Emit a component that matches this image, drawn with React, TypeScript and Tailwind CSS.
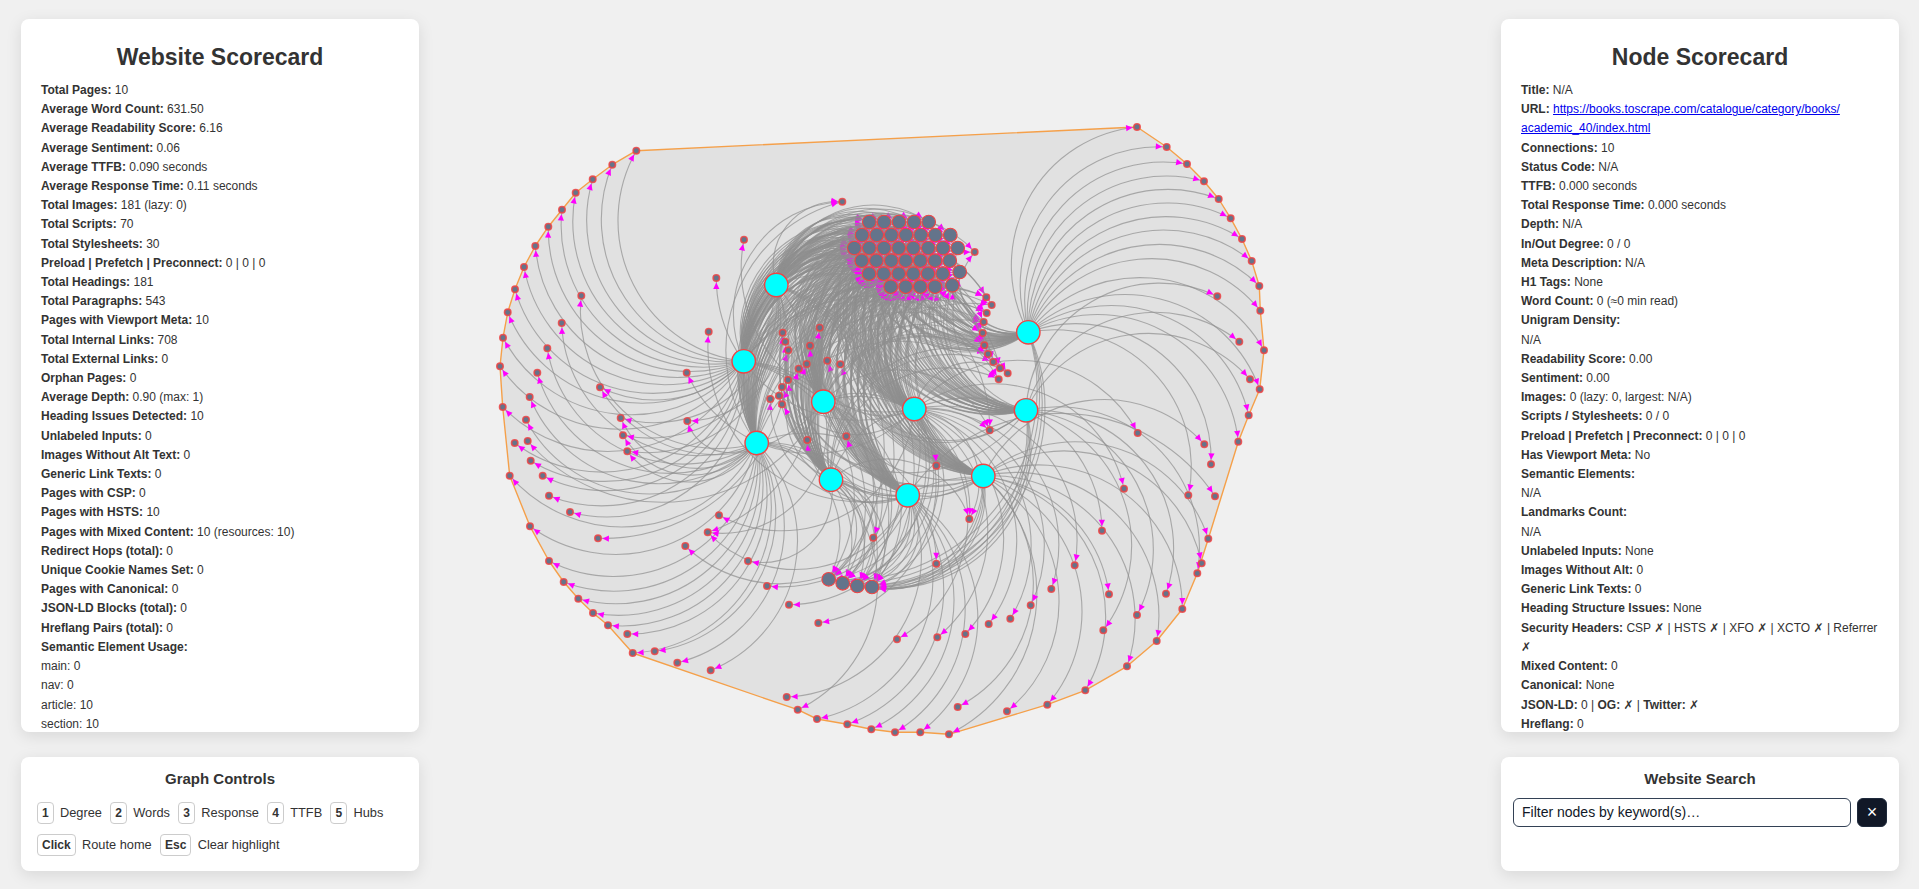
import React from 'react';

type Pt = [number, number];

const hubs: Record<string, Pt> = {
  A: [776.3, 285],
  B: [743.7, 361.3],
  C: [823.3, 401.7],
  D: [914.3, 409],
  E: [1028.3, 332.3],
  F: [1026, 410.3],
  G: [983.3, 476],
  H: [907.7, 495.3],
  I: [831, 479.7],
  J: [756.7, 443],
};
const hubKeys = 'ABCDEFGHIJ';

const hull: Pt[] = [
  [1137, 127], [1166.7, 147], [1187, 164], [1204, 181.3], [1218.7, 199], [1230.7, 218.3], [1242, 239], [1251.7, 261],
  [1259.3, 286], [1260.3, 310.7], [1264, 350.3], [1259.7, 389.3], [1248.7, 415.3], [1238.3, 441.7], [1208.3, 538.7],
  [1197.3, 573.3], [1182.3, 609], [1156.7, 641], [1127, 666.3], [1085.3, 690.3], [1047.3, 704.7], [949, 734.3],
  [920.3, 732.3], [895, 732.3], [871.3, 729.3], [847.3, 724.3], [817, 719], [797.7, 709.7], [632.7, 653], [608, 625.3],
  [593, 613], [578.3, 598.7], [563.7, 582], [549, 561], [530, 526.3], [509.7, 475.7], [502.7, 407], [500, 366.3],
  [503, 337.7], [507.7, 312.3], [515, 289.3], [524, 267], [535.3, 246], [548.3, 226.7], [562, 209.7], [575.7, 192.7],
  [592.7, 179.3], [612.3, 164.7], [636.3, 150.7],
];

// small pages: x, y, which hubs link to them
const leaves: [number, number, string][] = [
  [636.3, 150.7, 'B'], [612.3, 164.7, 'B'], [592.7, 179.3, 'B'], [575.7, 192.7, 'B'], [562, 209.7, 'B'], [548.3, 226.7, 'B'],
  [535.3, 246, 'B'], [524, 267, 'B'], [515, 289.3, 'B'], [507.7, 312.3, 'B'], [503, 337.7, 'B'], [500, 366.3, 'B'],
  [502.7, 407, 'B'], [514.7, 443, 'B'], [530.7, 460.7, 'B'], [542.7, 475.7, 'B'], [549, 495.7, 'B'], [570, 512, 'B'],
  [529.7, 397, 'J'], [526, 419.7, 'J'], [509.7, 475.7, 'J'], [530, 526.3, 'J'], [549, 561, 'J'], [563.7, 582, 'J'],
  [578.3, 598.7, 'J'], [593, 613, 'J'], [608, 625.3, 'J'], [627.3, 634, 'J'], [632.7, 653, 'J'], [654.7, 651.3, 'J'],
  [677.3, 662.7, 'J'], [710.7, 670.3, 'J'], [537.3, 372.7, 'J'], [547.3, 348.3, 'J'], [561.7, 323, 'J'], [581.3, 295.7, 'J'],
  [936.3, 563.7, 'J'],
  [620.7, 418, 'AJ'], [623, 435.3, 'AJ'], [627.3, 451.3, 'AJ'], [687.3, 421, 'AJ'], [707.7, 532.3, 'ACH'], [600, 387.3, 'CA'],
  [527.7, 441, 'C'], [598, 538.3, 'A'],
  [1137, 127, 'E'], [1166.7, 147, 'E'], [1187, 164, 'E'], [1204, 181.3, 'E'], [1218.7, 199, 'E'], [1230.7, 218.3, 'E'],
  [1242, 239, 'E'], [1251.7, 261, 'E'], [1259.3, 286, 'E'], [1260.3, 310.7, 'E'], [1264, 350.3, 'E'], [1259.7, 389.3, 'E'],
  [1248.7, 415.3, 'E'], [1238.3, 441.7, 'E'], [1211, 464.3, 'E'], [1188.3, 495.3, 'E'],
  [1217.3, 296.3, 'F'], [1239.3, 341.7, 'F'], [1250, 379.3, 'F'], [1197.3, 573.3, 'F'], [1166, 593.7, 'F'], [1137, 615, 'F'],
  [1103.3, 630.3, 'F'],
  [1204.3, 444.3, 'G'], [1208.3, 538.7, 'G'], [1201.7, 563.3, 'G'], [1182.3, 609, 'G'], [1156.7, 641, 'G'], [1127, 666.3, 'G'],
  [1085.3, 690.3, 'G'], [1047.3, 704.7, 'G'], [949, 734.3, 'G'], [1007, 711.3, 'G'], [957.7, 707, 'G'],
  [1215, 496.3, 'H'], [1109, 594.3, 'H'], [920.3, 732.3, 'H'], [895, 732.3, 'H'], [871.3, 729.3, 'H'], [847.3, 724.3, 'H'],
  [817, 719, 'H'], [786.7, 697, 'H'], [685.3, 546, 'H'], [708.7, 331.7, 'H'],
  [1137.7, 433, 'D'], [1124, 488.7, 'D'], [1102, 530.7, 'D'], [1074.7, 565.3, 'D'], [1051.3, 589, 'D'], [1030.7, 605.3, 'D'],
  [1010.3, 618.7, 'D'], [988.7, 624, 'D'], [965.3, 634, 'D'], [937.3, 637.3, 'D'], [897, 639.3, 'D'], [818.3, 623, 'D'],
  [789, 604.7, 'D'], [767, 586, 'D'], [719, 515.3, 'D'], [686.7, 372.7, 'D'], [716.3, 278, 'D'], [744, 239.7, 'D'],
  [797.7, 709.7, 'I'], [873.3, 537.7, 'I'], [748, 561, 'I'],
  [974.7, 252, 'AIF'], [842.3, 201.7, 'BAJ'], [969.3, 519, 'CID'], [989.7, 430.3, 'ICA'], [936.3, 465.7, 'C'],
  [846.3, 436.3, 'G'], [807.3, 440, 'H'],
  [782.7, 332.7, 'G'], [785.3, 341.7, 'G'], [788.3, 350.3, 'H'], [819.7, 327.7, 'G'], [810, 345.7, 'D'], [806.7, 364, 'HI'],
  [798.7, 368.7, 'H'], [827.3, 360.7, 'F'], [840.3, 364.3, 'F'], [788, 380, 'G'], [782, 387, 'D'], [779, 395.7, 'G'],
  [770.3, 399, 'H'], [782, 404.3, 'F'],
  [986.3, 297.3, 'ACJ'], [991.7, 305, 'JIA'], [986.7, 313, 'BCJ'], [983.7, 322, 'ACI'], [982.7, 333, 'AJB'], [984.3, 345.3, 'CBA'],
  [988, 354, 'JAI'], [993.3, 362, 'CIA'], [1000, 368.3, 'CBA'], [1007.7, 373.3, 'DCB'], [998.7, 379.3, 'JIB'],
];

const big: Pt[] = [
  [869.3, 222], [884, 222], [899, 222], [914, 222], [928.7, 222],
  [862, 235], [876.7, 235], [891.3, 235], [906, 235], [920.7, 235], [935.3, 235], [950.3, 235],
  [854.3, 248], [869.3, 248], [884, 248], [898.7, 248], [913.3, 248], [928.3, 248], [943, 248], [957.7, 248],
  [861.7, 260.7], [876.3, 260.7], [891.3, 260.7], [905.7, 260.7], [920.3, 260.7], [935, 260.7], [949.7, 260.7],
  [869, 273.7], [883.7, 273.7], [898.7, 273.7], [913.3, 273.7], [928, 273.7], [942.7, 273.7], [959.7, 272],
  [890.7, 286.7], [905.7, 286.7], [920.3, 286.7], [935, 286.7], [952.3, 285.3],
  [828.7, 579.3], [842.7, 583.3], [857.3, 586], [872, 587],
];

const ARC = 0.6;
const TURN = Math.asin(1 / (2 * ARC));

function link(s: Pt, t: Pt, tr: number) {
  const dx = t[0] - s[0];
  const dy = t[1] - s[1];
  const d = Math.hypot(dx, dy);
  const r = d * ARC;
  const a = Math.atan2(dy, dx) + TURN;
  const hx = Math.cos(a);
  const hy = Math.sin(a);
  const tip = tr + 0.8;
  const bx = t[0] - hx * (tip + 6.4);
  const by = t[1] - hy * (tip + 6.4);
  const px = -hy * 3.1;
  const py = hx * 3.1;
  return {
    d: `M${s[0]},${s[1]}A${r},${r} 0 0,1 ${t[0]},${t[1]}`,
    arrow: `${t[0] - hx * tip},${t[1] - hy * tip} ${bx + px},${by + py} ${bx - px},${by - py}`,
  };
}

const links = [
  ...big.flatMap((t) => hubKeys.split('').map((k) => link(hubs[k], t, 7))),
  ...leaves.flatMap(([x, y, ks]) => ks.split('').map((k) => link(hubs[k], [x, y], 3.7))),
];

function Graph() {
  return (
    <svg className="absolute inset-0" width={1919} height={889}>
      <polygon
        points={hull.map((p) => p.join(',')).join(' ')}
        fill="#e1e1e1"
        stroke="#f5a04a"
        strokeWidth={1.4}
        strokeLinejoin="round"
      />
      {links.map((l, i) => (
        <g key={i}>
          <path d={l.d} fill="none" stroke="#8f8f8f" strokeOpacity={0.7} strokeWidth={1.1} />
          <polygon points={l.arrow} fill="#ff00ff" />
        </g>
      ))}
      {leaves.map(([x, y], i) => (
        <circle key={i} cx={x} cy={y} r={3.2} fill="#64748b" stroke="#ef4444" strokeOpacity={0.85} strokeWidth={1.6} />
      ))}
      {big.map(([x, y], i) => (
        <circle key={i} cx={x} cy={y} r={6.8} fill="#64748b" stroke="#ef4444" strokeWidth={1.1} />
      ))}
      {Object.values(hubs).map(([x, y], i) => (
        <circle key={i} cx={x} cy={y} r={11.7} fill="#00ffff" stroke="#ef4444" strokeWidth={1.4} />
      ))}
    </svg>
  );
}

function Row({ label, children }: { label?: string; children?: React.ReactNode }) {
  return (
    <div>
      {label && <strong className="font-bold">{label}</strong>}
      {label && children !== undefined ? ' ' : ''}
      {children}
    </div>
  );
}

const siteRows: [string, string][] = [
  ['Total Pages:', '10'],
  ['Average Word Count:', '631.50'],
  ['Average Readability Score:', '6.16'],
  ['Average Sentiment:', '0.06'],
  ['Average TTFB:', '0.090 seconds'],
  ['Average Response Time:', '0.11 seconds'],
  ['Total Images:', '181 (lazy: 0)'],
  ['Total Scripts:', '70'],
  ['Total Stylesheets:', '30'],
  ['Preload | Prefetch | Preconnect:', '0 | 0 | 0'],
  ['Total Headings:', '181'],
  ['Total Paragraphs:', '543'],
  ['Pages with Viewport Meta:', '10'],
  ['Total Internal Links:', '708'],
  ['Total External Links:', '0'],
  ['Orphan Pages:', '0'],
  ['Average Depth:', '0.90 (max: 1)'],
  ['Heading Issues Detected:', '10'],
  ['Unlabeled Inputs:', '0'],
  ['Images Without Alt Text:', '0'],
  ['Generic Link Texts:', '0'],
  ['Pages with CSP:', '0'],
  ['Pages with HSTS:', '10'],
  ['Pages with Mixed Content:', '10 (resources: 10)'],
  ['Redirect Hops (total):', '0'],
  ['Unique Cookie Names Set:', '0'],
  ['Pages with Canonical:', '0'],
  ['JSON-LD Blocks (total):', '0'],
  ['Hreflang Pairs (total):', '0'],
];

const nodeRowsTop: [string, string][] = [
  ['Connections:', '10'],
  ['Status Code:', 'N/A'],
  ['TTFB:', '0.000 seconds'],
  ['Total Response Time:', '0.000 seconds'],
  ['Depth:', 'N/A'],
  ['In/Out Degree:', '0 / 0'],
  ['Meta Description:', 'N/A'],
  ['H1 Tags:', 'None'],
  ['Word Count:', '0 (≈0 min read)'],
];

const nodeRowsMid: [string, string][] = [
  ['Readability Score:', '0.00'],
  ['Sentiment:', '0.00'],
  ['Images:', '0 (lazy: 0, largest: N/A)'],
  ['Scripts / Stylesheets:', '0 / 0'],
  ['Preload | Prefetch | Preconnect:', '0 | 0 | 0'],
  ['Has Viewport Meta:', 'No'],
];

const nodeRowsEnd: [string, string][] = [
  ['Unlabeled Inputs:', 'None'],
  ['Images Without Alt:', '0'],
  ['Generic Link Texts:', '0'],
  ['Heading Structure Issues:', 'None'],
  ['Security Headers:', 'CSP ✗ | HSTS ✗ | XFO ✗ | XCTO ✗ | Referrer ✗'],
  ['Mixed Content:', '0'],
  ['Canonical:', 'None'],
];

function Panel({ className, children }: { className: string; children: React.ReactNode }) {
  return <div className={`bg-white rounded-lg shadow-[0_4px_16px_rgba(0,0,0,0.1)] overflow-hidden ${className}`}>{children}</div>;
}

function Hint({ k, label }: { k: string; label: string }) {
  return (
    <span className="inline-flex items-center gap-[6.3px] mr-[8.3px]">
      <kbd className="inline-flex items-center justify-center h-[22px] px-[4px] border border-[#ccc] rounded font-bold text-[12px] font-['Liberation_Sans',sans-serif]">
        {k}
      </kbd>
      <span>{label}</span>
    </span>
  );
}

export default function App() {
  return (
    <div className="relative h-screen overflow-hidden bg-[#f0f0f0] text-[#333] font-['Liberation_Sans','DejaVu_Sans',sans-serif]">
      <Graph />
      <div className="relative flex justify-between pl-[21px] pr-[20px] pt-[19px]">
        <div className="flex flex-col gap-[25px] w-[398px]">
          <Panel className="h-[713px] px-[20px] pt-[24px]">
            <h2 className="text-center text-[23px] leading-[28px] font-bold mb-[10px]">Website Scorecard</h2>
            <div className="text-[12px] leading-[19.2px]">
              {siteRows.map(([l, v]) => (
                <Row key={l} label={l}>{v}</Row>
              ))}
              <Row label="Semantic Element Usage:" />
              <div>main: 0</div>
              <div>nav: 0</div>
              <div>article: 10</div>
              <div>section: 10</div>
            </div>
          </Panel>
          <Panel className="h-[114px] px-[16px] pt-[12px]">
            <h3 className="text-center text-[15px] leading-[20px] font-bold mb-[13px]">Graph Controls</h3>
            <div className="flex flex-wrap gap-y-[10px] text-[12.8px] leading-[22px]">
              <Hint k="1" label="Degree" />
              <Hint k="2" label="Words" />
              <Hint k="3" label="Response" />
              <Hint k="4" label="TTFB" />
              <Hint k="5" label="Hubs" />
              <Hint k="Click" label="Route home" />
              <Hint k="Esc" label="Clear highlight" />
            </div>
          </Panel>
        </div>
        <div className="flex flex-col gap-[25px] w-[398px]">
          <Panel className="h-[713px] px-[20px] pt-[24px]">
            <h2 className="text-center text-[23px] leading-[28px] font-bold mb-[10px]">Node Scorecard</h2>
            <div className="text-[12px] leading-[19.2px]">
              <Row label="Title:">N/A</Row>
              <Row label="URL:">
                <a href="#" className="text-[#0000ee] underline">
                  https://books.toscrape.com/catalogue/category/books/<wbr />academic_40/index.html
                </a>
              </Row>
              {nodeRowsTop.map(([l, v]) => (
                <Row key={l} label={l}>{v}</Row>
              ))}
              <Row label="Unigram Density:" />
              <div>N/A</div>
              {nodeRowsMid.map(([l, v]) => (
                <Row key={l} label={l}>{v}</Row>
              ))}
              <Row label="Semantic Elements:" />
              <div>N/A</div>
              <Row label="Landmarks Count:" />
              <div>N/A</div>
              {nodeRowsEnd.map(([l, v]) => (
                <Row key={l} label={l}>{v}</Row>
              ))}
              <div>
                <strong className="font-bold">JSON-LD:</strong> 0 | <strong className="font-bold">OG:</strong> ✗ |{' '}
                <strong className="font-bold">Twitter:</strong> ✗
              </div>
              <Row label="Hreflang:">0</Row>
            </div>
          </Panel>
          <Panel className="h-[114px] px-[12px] pt-[12px]">
            <h3 className="text-center text-[15px] leading-[20px] font-bold mb-[8.5px]">Website Search</h3>
            <div className="flex gap-[6px]">
              <input
                readOnly
                placeholder="Filter nodes by keyword(s)…"
                className="flex-1 min-w-0 h-[29.5px] px-[8px] border border-[#334155] rounded-md bg-white text-[14px] placeholder:text-[#111827] outline-none"
              />
              <button className="flex items-center justify-center w-[30px] h-[29.5px] rounded-md bg-[#111827] border border-[#1e293b] text-white text-[18px] leading-none">
                ×
              </button>
            </div>
          </Panel>
        </div>
      </div>
    </div>
  );
}
